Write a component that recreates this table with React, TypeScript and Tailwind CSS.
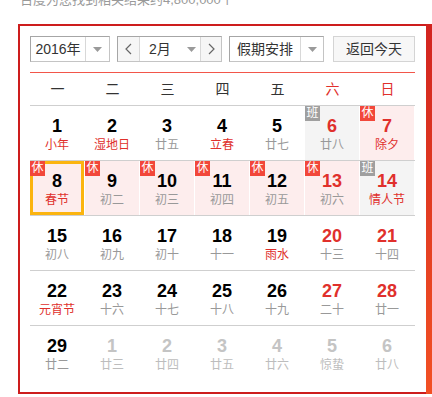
import React from "react";

type Cell = {
  d: number;
  l: string;
  lr?: boolean;
  rest?: boolean;
  work?: boolean;
  next?: boolean;
  today?: boolean;
};

const rows: Cell[][] = [
  [
    { d: 1, l: "小年", lr: true },
    { d: 2, l: "湿地日", lr: true },
    { d: 3, l: "廿五" },
    { d: 4, l: "立春", lr: true },
    { d: 5, l: "廿七" },
    { d: 6, l: "廿八", work: true },
    { d: 7, l: "除夕", lr: true, rest: true },
  ],
  [
    { d: 8, l: "春节", lr: true, rest: true, today: true },
    { d: 9, l: "初二", rest: true },
    { d: 10, l: "初三", rest: true },
    { d: 11, l: "初四", rest: true },
    { d: 12, l: "初五", rest: true },
    { d: 13, l: "初六", rest: true },
    { d: 14, l: "情人节", lr: true, work: true },
  ],
  [
    { d: 15, l: "初八" },
    { d: 16, l: "初九" },
    { d: 17, l: "初十" },
    { d: 18, l: "十一" },
    { d: 19, l: "雨水", lr: true },
    { d: 20, l: "十三" },
    { d: 21, l: "十四" },
  ],
  [
    { d: 22, l: "元宵节", lr: true },
    { d: 23, l: "十六" },
    { d: 24, l: "十七" },
    { d: 25, l: "十八" },
    { d: 26, l: "十九" },
    { d: 27, l: "二十" },
    { d: 28, l: "廿一" },
  ],
  [
    { d: 29, l: "廿二" },
    { d: 1, l: "廿三", next: true },
    { d: 2, l: "廿四", next: true },
    { d: 3, l: "廿五", next: true },
    { d: 4, l: "廿六", next: true },
    { d: 5, l: "惊蛰", next: true },
    { d: 6, l: "廿八", next: true },
  ],
];

const weekdays = ["一", "二", "三", "四", "五", "六", "日"];

function Arrow() {
  return (
    <svg width="9" height="5" viewBox="0 0 9 5">
      <path d="M0 0 L9 0 L4.5 5 Z" fill="#9a9a9a" />
    </svg>
  );
}

function Chevron({ dir }: { dir: "l" | "r" }) {
  return (
    <svg width="7" height="12" viewBox="0 0 7 12">
      <path
        d={dir === "l" ? "M6 1 L1 6 L6 11" : "M1 1 L6 6 L1 11"}
        fill="none"
        stroke="#666"
        strokeWidth="1.2"
      />
    </svg>
  );
}

function DayCell({ c, col }: { c: Cell; col: number }) {
  const weekend = col >= 5;
  const bg = c.rest ? "bg-[#fdeded]" : c.work ? "bg-[#f4f4f4]" : "bg-white";
  const numColor = c.next
    ? "text-[#c4c4c4]"
    : weekend
    ? "text-[#e0302c]"
    : "text-black";
  const lunarColor = c.next
    ? "text-[#bdbdbd]"
    : c.lr
    ? "text-[#e0302c]"
    : "text-[#999]";
  return (
    <div className={`relative w-[54px] h-[54px] ${bg} flex flex-col items-center pt-[9px]`}>
      {c.today && (
        <div className="absolute inset-0 border-[3px] border-[#fbb40f]" />
      )}
      {(c.rest || c.work) && (
        <div
          className={`absolute top-0 left-0 w-[15px] h-[15px] ${
            c.rest ? "bg-[#f2473a]" : "bg-[#9f9f9f]"
          } text-white text-[12px] leading-[15px] text-center`}
        >
          {c.rest ? "休" : "班"}
        </div>
      )}
      <div className={`relative text-[18px] leading-[22px] font-bold ${numColor}`}>{c.d}</div>
      <div className={`relative text-[12px] leading-[16px] ${lunarColor}`}>{c.l}</div>
    </div>
  );
}

export default function App() {
  return (
    <div className="w-[432px] h-[397px] overflow-hidden bg-white font-['Liberation_Sans','Noto_Sans_CJK_SC',sans-serif]">
      <div className="pl-[20px] -mt-[9px] text-[13px] leading-[18px] text-[#9a9a9a]">
        百度为您找到相关结果约4,800,000个
      </div>
      <div className="flex mt-[15px]">
        <div className="ml-[18px] w-[408px] h-[370px] border-2 border-r-0 border-[#cd1d1d] pl-[10px] pt-[10px]">
          {/* controls */}
          <div className="flex h-[26px] text-[14px] text-[#333]">
            <div className="flex w-[80px] h-[26px] border border-[#c4c4c4] border-t-[#a6a6a6] border-l-[#a6a6a6] bg-white">
              <div className="w-[54px] flex items-center justify-center">2016年</div>
              <div className="flex-1 border-l border-[#d8d8d8] flex items-center justify-center">
                <Arrow />
              </div>
            </div>
            <div className="ml-[7px] flex w-[105px] h-[26px] border border-[#c4c4c4] border-t-[#a6a6a6] border-l-[#a6a6a6] bg-white">
              <div className="w-[22px] bg-[#f6f6f6] border-r border-[#d8d8d8] flex items-center justify-center">
                <Chevron dir="l" />
              </div>
              <div className="w-[60px] flex items-center pl-[9px]">
                <span>2月</span>
                <span className="ml-[16px] flex items-center">
                  <Arrow />
                </span>
              </div>
              <div className="flex-1 bg-[#f6f6f6] border-l border-[#d8d8d8] flex items-center justify-center">
                <Chevron dir="r" />
              </div>
            </div>
            <div className="ml-[7px] flex w-[95px] h-[26px] border border-[#c4c4c4] border-t-[#a6a6a6] border-l-[#a6a6a6] bg-white">
              <div className="w-[70px] flex items-center justify-center">假期安排</div>
              <div className="flex-1 border-l border-[#d8d8d8] flex items-center justify-center">
                <Arrow />
              </div>
            </div>
            <div className="ml-[9px] w-[82px] h-[26px] border border-[#d4d4d4] bg-[#f7f7f7] flex items-center justify-center">
              返回今天
            </div>
          </div>
          {/* red line */}
          <div className="mt-[10px] w-[385px] h-px bg-[#f2564a]" />
          {/* week header */}
          <div className="flex w-[385px] h-[33px] border-b border-[#cfcfcf]">
            {weekdays.map((w, i) => (
              <div
                key={w}
                className={`w-[55px] flex items-center justify-center text-[14px] ${
                  i >= 5 ? "text-[#e0302c]" : "text-[#333]"
                }`}
              >
                {w}
              </div>
            ))}
          </div>
          {/* rows */}
          {rows.map((r, ri) => (
            <div
              key={ri}
              className={`flex gap-px w-[385px] ${ri < rows.length - 1 ? "border-b border-[#cfcfcf]" : ""}`}
            >
              {r.map((c, ci) => (
                <DayCell key={ci} c={c} col={ci} />
              ))}
            </div>
          ))}
        </div>
        <div className="w-[6px] h-[370px] bg-gradient-to-b from-[#d2231f] to-[#f25024]" />
      </div>
    </div>
  );
}
